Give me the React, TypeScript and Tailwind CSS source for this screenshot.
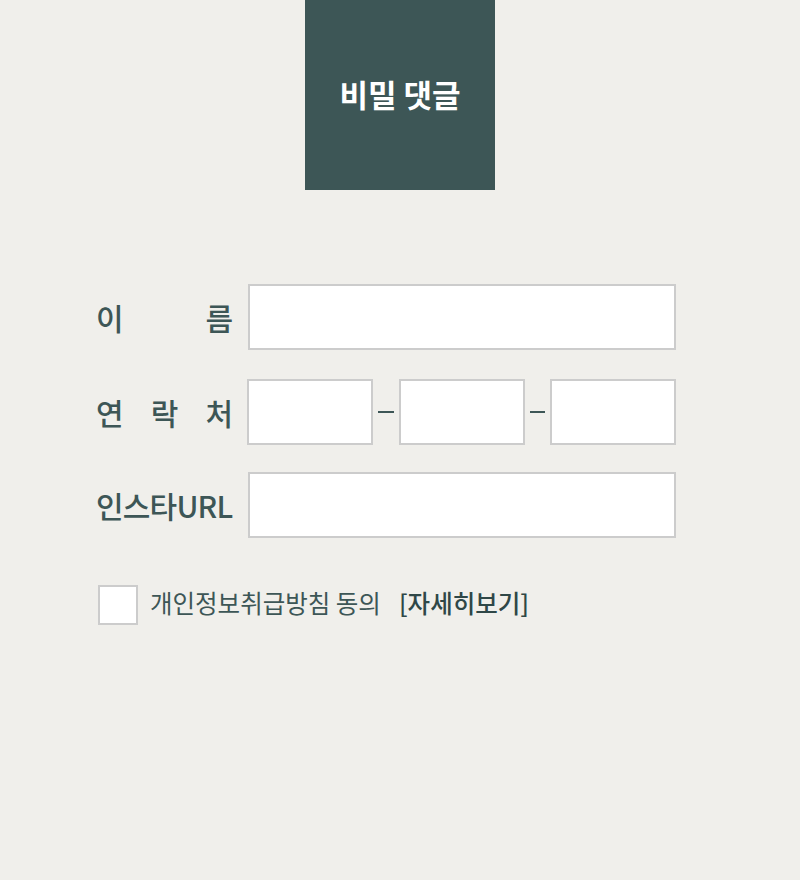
import React from "react";

const font = { fontFamily: '"Noto Sans CJK KR", "Noto Sans", sans-serif' };

function Input({ className = "" }: { className?: string }) {
  return (
    <div className={`h-[66px] border-2 border-[#cccccc] bg-white ${className}`} />
  );
}

function Label({ chars }: { chars: string[] }) {
  return (
    <div className="flex w-[137px] shrink-0 justify-between text-[30px] font-medium leading-none text-[#3d5656]">
      {chars.map((c, i) => (
        <span key={i}>{c}</span>
      ))}
    </div>
  );
}

export default function App() {
  return (
    <div className="min-h-[880px] w-full bg-[#f0efeb]" style={font}>
      <div className="flex justify-center">
        <div className="flex h-[190px] w-[190px] items-center justify-center bg-[#3d5656] pb-[2px] text-[31px] font-bold text-white">
          비밀 댓글
        </div>
      </div>
      <div className="flex flex-col pl-[96px] pt-[94px]">
        <div className="flex items-center gap-[15px]">
          <Label chars={["이", "름"]} />
          <Input className="w-[428px]" />
        </div>
        <div className="mt-[29px] flex items-center">
          <Label chars={["연", "락", "처"]} />
          <div className="ml-[14px] flex items-center">
            <Input className="w-[126px]" />
            <div className="mx-[5px] h-[2px] w-[16px] bg-[#3d5656]" />
            <Input className="w-[126px]" />
            <div className="mx-[5px] h-[2px] w-[15px] bg-[#3d5656]" />
            <Input className="w-[126px]" />
          </div>
        </div>
        <div className="mt-[27px] flex items-center gap-[15px]">
          <div className="w-[137px] shrink-0 whitespace-nowrap text-[30px] font-medium leading-none tracking-[-0.8px] text-[#3d5656]">
            인스타URL
          </div>
          <Input className="w-[428px]" />
        </div>
      </div>
      <div className="mt-[47px] flex items-center pl-[98px]">
        <div className="h-[40px] w-[40px] border-2 border-[#cccccc] bg-white" />
        <span className="ml-[12px] pb-[4px] text-[24.5px] leading-none text-[#3d5656]">
          개인정보취급방침 동의
        </span>
        <span className="ml-[18px] pb-[4px] text-[24.5px] font-medium leading-none text-[#2f4747]">
          [자세히보기]
        </span>
      </div>
    </div>
  );
}
